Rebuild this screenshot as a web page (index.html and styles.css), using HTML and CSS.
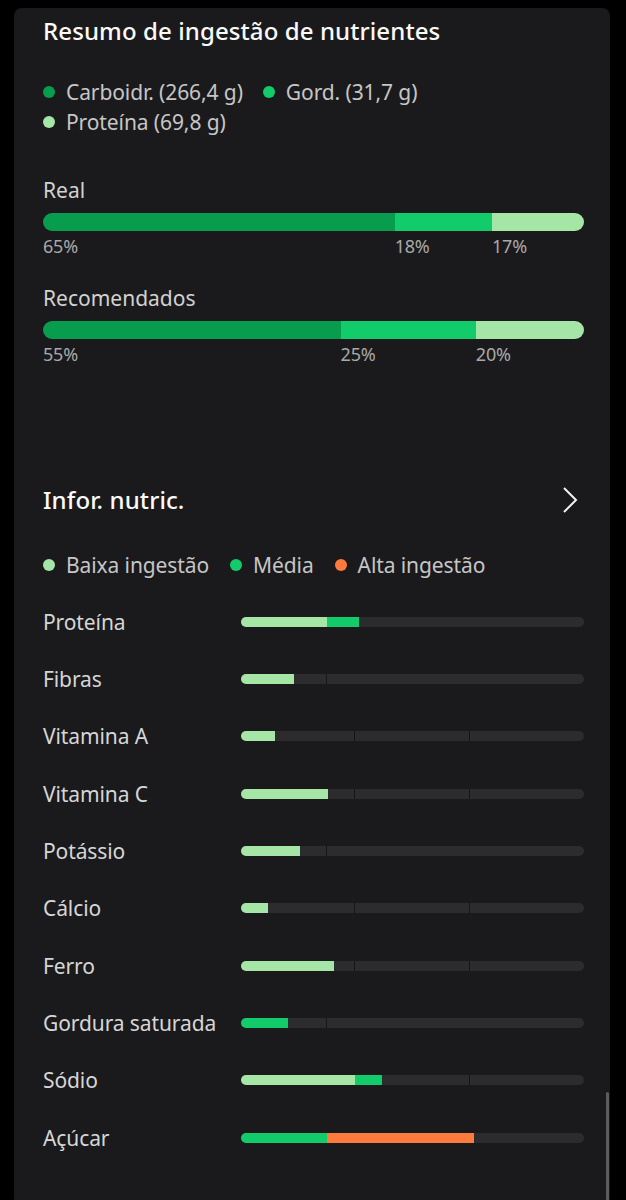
FILE: index.html
```html
<!DOCTYPE html>
<html lang="pt">
<head>
    <meta charset="UTF-8">
    <meta name="viewport" content="width=device-width, initial-scale=1.0">
    <title>Resumo de ingestão de nutrientes</title>
    <link rel="stylesheet" href="styles.css">
</head>
<body>
    <div class="card">
        <h2 class="title">Resumo de ingestão de nutrientes</h2>

        <div class="legend">
            <span class="legend-item"><i class="dot carb"></i>Carboidr. (266,4 g)</span>
            <span class="legend-item"><i class="dot fat"></i>Gord. (31,7 g)</span>
            <span class="legend-item"><i class="dot prot"></i>Proteína (69,8 g)</span>
        </div>

        <div class="ratio ratio-first">
            <div class="ratio-label">Real</div>
            <div class="ratio-bar">
                <span class="seg carb" style="width: 65%"></span>
                <span class="seg fat" style="width: 18%"></span>
                <span class="seg prot" style="width: 17%"></span>
            </div>
            <div class="ratio-values">
                <span style="width: 65%">65%</span>
                <span style="width: 18%">18%</span>
                <span style="width: 17%">17%</span>
            </div>
        </div>

        <div class="ratio">
            <div class="ratio-label">Recomendados</div>
            <div class="ratio-bar">
                <span class="seg carb" style="width: 55%"></span>
                <span class="seg fat" style="width: 25%"></span>
                <span class="seg prot" style="width: 20%"></span>
            </div>
            <div class="ratio-values">
                <span style="width: 55%">55%</span>
                <span style="width: 25%">25%</span>
                <span style="width: 20%">20%</span>
            </div>
        </div>

        <div class="section-head">
            <h2 class="title">Infor. nutric.</h2>
            <svg class="chevron" width="20" height="30" viewBox="0 0 20 30">
                <polyline points="4,3 16,15 4,27" fill="none" stroke="#f2f2f2" stroke-width="2"/>
            </svg>
        </div>

        <div class="legend legend-levels">
            <span class="legend-item"><i class="dot low"></i>Baixa ingestão</span>
            <span class="legend-item"><i class="dot mid"></i>Média</span>
            <span class="legend-item"><i class="dot high"></i>Alta ingestão</span>
        </div>

        <ul class="nutrients">
            <li class="nutrient">
                <span class="name">Proteína</span>
                <div class="track q">
                    <span class="fill low" style="width: 25.2%"></span>
                    <span class="fill mid" style="width: 9.1%"></span>
                </div>
            </li>
            <li class="nutrient">
                <span class="name">Fibras</span>
                <div class="track q">
                    <span class="fill low" style="width: 15.5%"></span>
                </div>
            </li>
            <li class="nutrient">
                <span class="name">Vitamina A</span>
                <div class="track t">
                    <span class="fill low" style="width: 9.9%"></span>
                </div>
            </li>
            <li class="nutrient">
                <span class="name">Vitamina C</span>
                <div class="track t">
                    <span class="fill low" style="width: 25.4%"></span>
                </div>
            </li>
            <li class="nutrient">
                <span class="name">Potássio</span>
                <div class="track q">
                    <span class="fill low" style="width: 17.3%"></span>
                </div>
            </li>
            <li class="nutrient">
                <span class="name">Cálcio</span>
                <div class="track t">
                    <span class="fill low" style="width: 7.9%"></span>
                </div>
            </li>
            <li class="nutrient">
                <span class="name">Ferro</span>
                <div class="track t">
                    <span class="fill low" style="width: 27.2%"></span>
                </div>
            </li>
            <li class="nutrient">
                <span class="name">Gordura saturada</span>
                <div class="track q">
                    <span class="fill mid" style="width: 13.7%"></span>
                </div>
            </li>
            <li class="nutrient">
                <span class="name">Sódio</span>
                <div class="track t">
                    <span class="fill low" style="width: 33.3%"></span>
                    <span class="fill mid" style="width: 7.9%"></span>
                </div>
            </li>
            <li class="nutrient">
                <span class="name">Açúcar</span>
                <div class="track q">
                    <span class="fill mid" style="width: 25.1%"></span>
                    <span class="fill high" style="width: 42.7%"></span>
                </div>
            </li>
        </ul>

        <div class="scrollbar"></div>
    </div>
</body>
</html>
```

FILE: styles.css
```css
body {
    margin: 0;
    background: #000;
    font-family: "Noto Sans", Roboto, sans-serif;
    color: #d6d6d6;
    overflow: hidden;
}

.card {
    position: relative;
    margin: 8px 16px 0 14px;
    padding: 7px 26px 60px 29px;
    background: #1a1a1c;
    border-radius: 8px 8px 28px 28px;
}

.title {
    margin: 0;
    font-size: 24px;
    line-height: 32px;
    font-weight: 500;
    color: #fafafa;
    letter-spacing: 0.1px;
}

.legend {
    display: flex;
    flex-wrap: wrap;
    column-gap: 20px;
    margin-top: 30px;
    width: 430px;
}

.legend-item {
    display: flex;
    align-items: center;
    font-size: 21px;
    line-height: 30px;
    color: #c6c6c6;
    letter-spacing: -0.1px;
}

.dot {
    width: 12px;
    height: 12px;
    border-radius: 50%;
    margin-right: 11px;
}

.carb { background: #089c4f; }
.fat  { background: #12cc6b; }
.prot { background: #a5e6a6; }
.low  { background: #a5e6a6; }
.mid  { background: #12cc6b; }
.high { background: #ff7a3d; }

.ratio {
    margin-top: 27px;
}

.ratio-first {
    margin-top: 39px;
}

.ratio-label {
    font-size: 21px;
    line-height: 28px;
    color: #d2d2d2;
}

.ratio-bar {
    display: flex;
    height: 18px;
    margin-top: 9px;
    border-radius: 9px;
    overflow: hidden;
}

.ratio-values {
    display: flex;
    margin-top: 4px;
    font-size: 18px;
    line-height: 22px;
    color: #a9a9a9;
    letter-spacing: -0.2px;
}

.section-head {
    display: flex;
    justify-content: space-between;
    align-items: center;
    margin-top: 119px;
}

.chevron {
    margin-right: 4px;
}

.legend-levels {
    margin-top: 34px;
    column-gap: 21px;
    width: auto;
}

.nutrients {
    list-style: none;
    margin: 13px 0 0;
    padding: 0;
}

.nutrient {
    display: grid;
    grid-template-columns: 198px 1fr;
    align-items: center;
    height: 57.33px;
}

.name {
    font-size: 21px;
    color: #d6d6d6;
    letter-spacing: -0.1px;
}

.track {
    position: relative;
    display: flex;
    height: 10px;
    border-radius: 5px;
    overflow: hidden;
    background: #2c2c2e;
}

.track.q {
    background: linear-gradient(to right, transparent calc(25% - 1px), #161618 calc(25% - 1px), #161618 25%, transparent 25%), #2c2c2e;
}

.track.t {
    background: linear-gradient(to right, transparent calc(33.3% - 1px), #161618 calc(33.3% - 1px), #161618 33.3%, transparent 33.3%, transparent calc(66.7% - 1px), #161618 calc(66.7% - 1px), #161618 66.7%, transparent 66.7%), #2c2c2e;
}

.fill {
    height: 100%;
}

.scrollbar {
    position: absolute;
    right: 1px;
    top: 1084px;
    width: 3px;
    height: 120px;
    border-radius: 2px;
    background: #5c5c5e;
}
```
